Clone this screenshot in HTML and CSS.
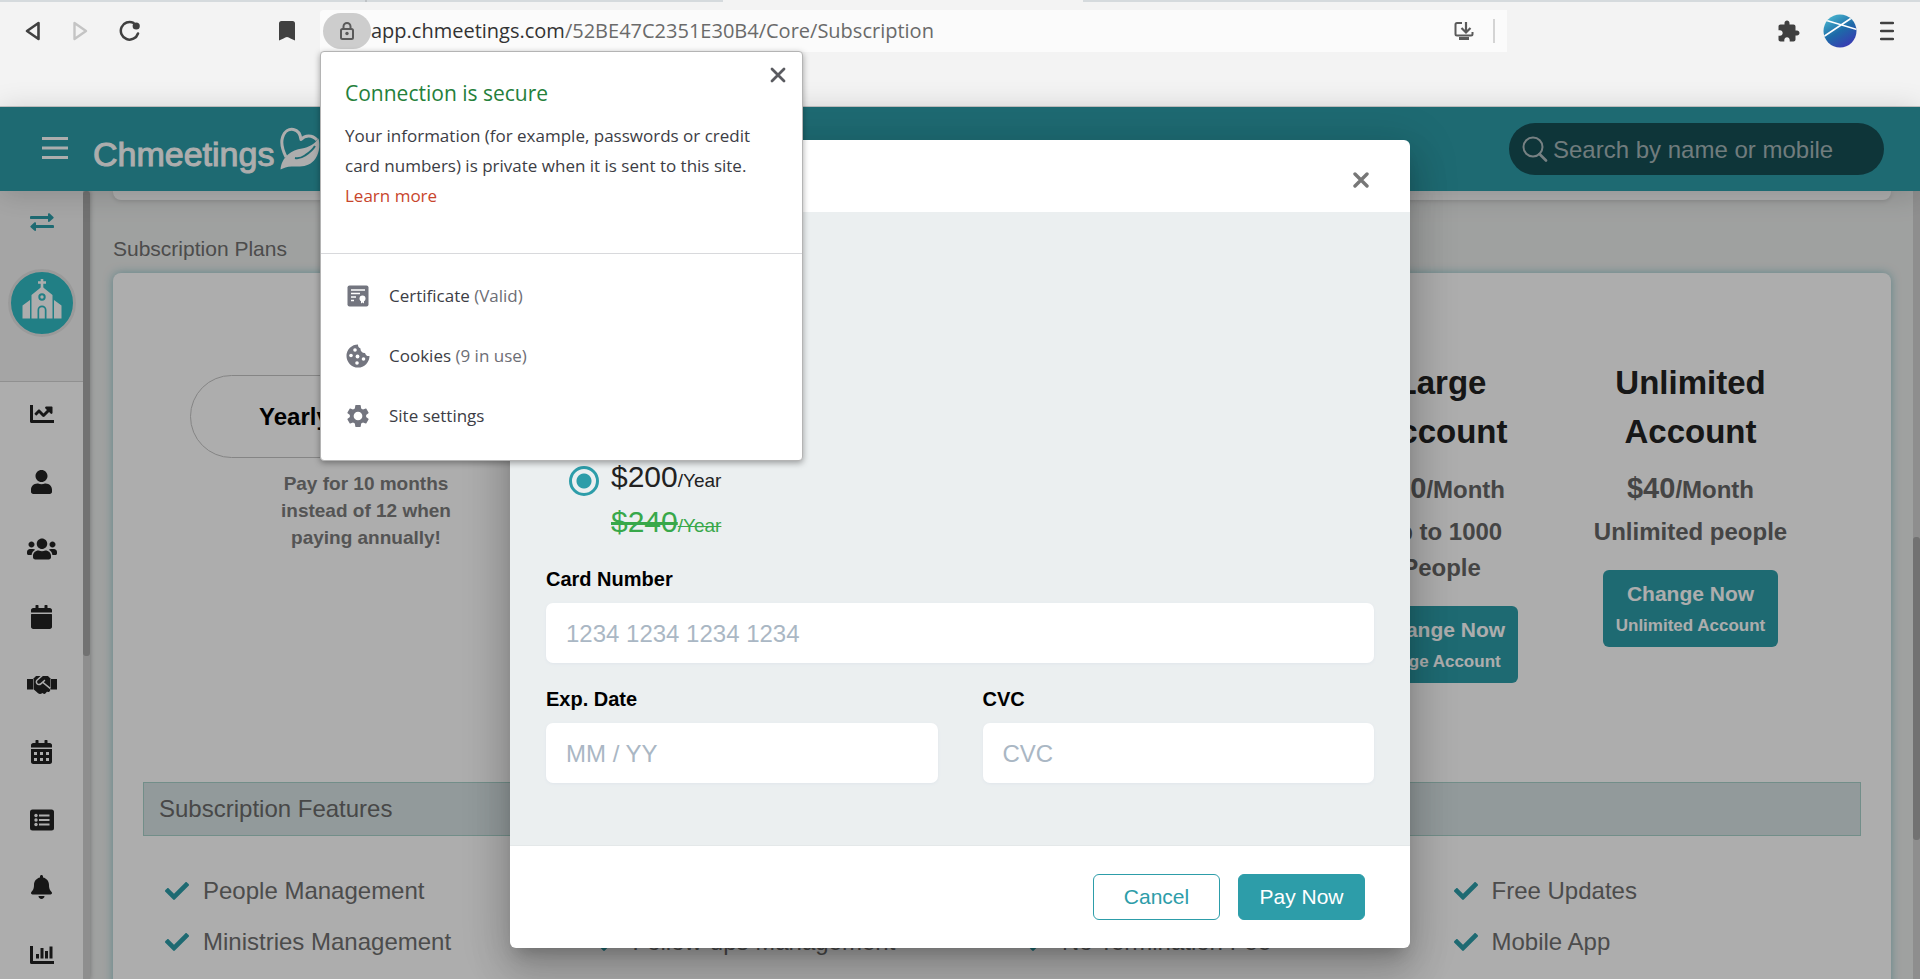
FILE: index.html
```html
<!DOCTYPE html>
<html lang="en">
<head>
<meta charset="utf-8">
<title>Subscription</title>
<link rel="stylesheet" href="styles.css">
</head>
<body>
<svg class="defs" aria-hidden="true">
  <symbol id="check" viewBox="0 0 512 512"><path d="M173.9 439.4l-166.4-166.4c-10-10-10-26.2 0-36.2l36.2-36.2c10-10 26.2-10 36.2 0L192 312.7 432.1 72.6c10-10 26.2-10 36.2 0l36.2 36.2c10 10 10 26.2 0 36.2l-294.4 294.4c-10 10-26.2 10-36.2 0z"/></symbol>
</svg>
<div class="window">
  <header class="chrome">
    <div class="tabstrip"><span class="tab-sep"></span><span class="tab-active"></span></div>
    <div class="toolbar">
      <nav class="nav-buttons">
        <button class="icon-btn" aria-label="Back"><svg width="16" height="22" viewBox="0 0 16 22"><path d="M13.5 3v16L2 11z" fill="none" stroke="#404040" stroke-width="2.6" stroke-linejoin="round"/></svg></button>
        <button class="icon-btn" aria-label="Forward"><svg width="16" height="22" viewBox="0 0 16 22"><path d="M2.5 3v16L14 11z" fill="none" stroke="#c4c4c4" stroke-width="2.4" stroke-linejoin="round"/></svg></button>
        <button class="icon-btn" aria-label="Reload"><svg width="22" height="22" viewBox="0 0 22 22"><path d="M14.5 2.9A8.8 8.8 0 1 0 19 13.5" fill="none" stroke="#404040" stroke-width="2.5" stroke-linecap="round"/><circle cx="17.2" cy="6" r="3.6" fill="#404040"/></svg></button>
      </nav>
      <button class="icon-btn bookmark" aria-label="Bookmark"><svg width="16" height="20" viewBox="0 0 16 20"><path d="M2.5 0h11A2.500 2.500 0 0 1 16 2.500V19.500L11.500 17.500Q8 14.500 4.500 17.500L0 19.500V2.500A2.500 2.500 0 0 1 2.500 0z" fill="#404040"/></svg></button>
      <div class="address">
        <button class="lock" aria-label="Site information"><svg width="14" height="18" viewBox="0 0 14 18"><rect x="1" y="7" width="12" height="10" rx="1.500" fill="none" stroke="#5a5a5a" stroke-width="2"/><path d="M3.500 7V4.500a3.500 3.500 0 0 1 7 0V7" fill="none" stroke="#5a5a5a" stroke-width="2"/><circle cx="7" cy="11.500" r="1.700" fill="#5a5a5a"/></svg></button>
        <div class="url">app.chmeetings.com<span>/52BE47C2351E30B4/Core/Subscription</span></div>
        <button class="icon-btn" aria-label="Install app"><svg width="20" height="20" viewBox="0 0 20 20"><path d="M8 2H3a1.500 1.500 0 0 0-1.500 1.500V13A1.500 1.500 0 0 0 3 14.500h14a1.500 1.500 0 0 0 1.500-1.500v-2" fill="none" stroke="#5a5a5a" stroke-width="2"/><path d="M12 1v10M7.500 7l4.500 4.500L16.500 7" fill="none" stroke="#5a5a5a" stroke-width="2.200"/><path d="M5 16h10v3H5z" fill="#5a5a5a"/></svg></button>
        <span class="address-sep"></span>
      </div>
      <div class="chrome-actions">
        <button class="icon-btn" aria-label="Extensions"><svg width="22" height="22" viewBox="1.500 0.500 22 22"><path d="M20.500 11H19V7c0-1.100-.9-2-2-2h-4V3.500C13 2.120 11.880 1 10.500 1S8 2.120 8 3.500V5H4c-1.100 0-1.990.9-1.990 2v3.800H3.500c1.490 0 2.700 1.210 2.700 2.700s-1.210 2.700-2.700 2.700H2V20c0 1.100.9 2 2 2h3.800v-1.500c0-1.490 1.210-2.700 2.700-2.700 1.490 0 2.700 1.210 2.700 2.700V22H17c1.100 0 2-.9 2-2v-4h1.500c1.380 0 2.500-1.120 2.500-2.500S21.880 11 20.500 11z" fill="#404040"/></svg></button>
        <button class="icon-btn" aria-label="Profile"><svg width="34" height="34" viewBox="0 0 34 34"><defs><linearGradient id="av" x1="0.200" y1="0" x2="0.800" y2="1"><stop offset="0" stop-color="#4ab8d0"/><stop offset=".5" stop-color="#1d6aa8"/><stop offset="1" stop-color="#3c35b4"/></linearGradient><clipPath id="avc"><circle cx="17" cy="17" r="16.500"/></clipPath></defs><circle cx="17" cy="17" r="16.500" fill="url(#av)"/><path d="M0 23L30 3M2 6L34 15.500" stroke="#fff" stroke-width="1.600" clip-path="url(#avc)"/></svg></button>
        <button class="icon-btn" aria-label="Menu"><svg width="14" height="20" viewBox="0 0 14 20"><path d="M1 2h12M1 10h12M1 18h12" stroke="#404040" stroke-width="2.400" stroke-linecap="round"/></svg></button>
      </div>
    </div>
  </header>

  <div class="app">
    <header class="app-bar">
      <button class="icon-btn" aria-label="Toggle menu"><svg width="26" height="22" viewBox="0 0 26 22"><path d="M0 1.500h26M0 11h26M0 20.500h26" stroke="#fff" stroke-width="3"/></svg></button>
      <a class="logo" href="#"><span>Chmeetings</span><svg width="46" height="46" viewBox="0 0 46 46"><path d="M6 31C3 25 .5 18 2.500 11.500 4.500 5 9 2.500 13.500 3.500 18.500 4.500 20.500 9 21 13.500 25 9 32 8.500 37 14" fill="none" stroke="#fff" stroke-width="3" stroke-linejoin="round"/><path d="M.5 43.500C1 38 3 33 8 28.500 12 25 16.500 23.500 22 22.500 29 21 34 18.500 38.500 12.500 40.500 20 39 29 34 34.500 29 40 22 41 14 40.500 8 40 4 41.500.5 43.500z" fill="#fff"/><path d="M15 32c4 .8 7-.5 10-2.500s7-4.500 10-9.500" fill="none" stroke="#2d9da9" stroke-width="2"/></svg></a>
      <label class="search"><svg width="26" height="26" viewBox="0 0 26 26"><circle cx="11" cy="11" r="9.500" fill="none" stroke="#b0bfc1" stroke-width="2"/><path d="M17.500 18l6.500 6.500" stroke="#b0bfc1" stroke-width="2.600" stroke-linecap="round"/></svg><input type="search" aria-label="Search" placeholder="Search by name or mobile"></label>
    </header>
    <div class="app-body">
      <aside class="sidebar">
        <div class="side-content">
          <div class="side-top">
            <a href="#" aria-label="Switch"><svg width="24" height="18" viewBox="0 0 24 18"><path d="M1.300 4.500H20M4 13.500h18.700" stroke="#2d9da9" stroke-width="3" stroke-linecap="round"/><path d="M18 1.200c0-1 1-1.400 1.700-.7l3.700 3.400c.4.400.4.900 0 1.300l-3.700 3.400c-.7.700-1.700.200-1.700-.7zM6 10.200c0-1-1-1.400-1.700-.7L.6 12.900c-.4.400-.4.900 0 1.300l3.700 3.400c.7.700 1.700.2 1.700-.7z" fill="#2d9da9"/></svg></a>
            <a class="church" href="#" aria-label="Church"><svg width="40" height="40" viewBox="0 0 40 40"><path d="M20 0v9M16 3.500h8" stroke="#fff" stroke-width="2.600"/><path d="M20 7.500l10.500 8.500v23.500h-6V31a4.500 4.500 0 0 0-9 0v8.500h-6V16z" fill="#fff"/><path d="M.5 26.500l7.500-5.500v18.500H.5zM39.500 26.500L32 21v18.500h7.500zM17.200 39.500V31a2.800 2.800 0 0 1 5.600 0v8.500z" fill="#fff"/><circle cx="20" cy="18" r="2.700" fill="none" stroke="#31bcc4" stroke-width="2"/></svg></a>
          </div>
          <nav class="side-nav">
            <a href="#" aria-label="Dashboard"><svg width="24" height="24" viewBox="0 0 512 512"><path d="M496 384H64V64H0v352c0 17.700 14.300 32 32 32h480v-64zM464 96H346c-21.400 0-32.100 25.900-17 41l32.400 32.400L288 242.800l-73.400-73.400c-12.500-12.500-32.800-12.500-45.300 0l-68.700 68.700c-6.300 6.300-6.300 16.400 0 22.600l22.600 22.600c6.300 6.300 16.400 6.300 22.600 0L192 237.300l73.400 73.400c12.500 12.500 32.800 12.500 45.300 0l96-96 32.400 32.400c15.100 15.100 41 4.400 41-17V112c0-8.800-7.200-16-16-16z"/></svg></a>
            <a href="#" aria-label="People"><svg width="21" height="24" viewBox="0 0 448 512"><path d="M224 256c70.700 0 128-57.300 128-128S294.700 0 224 0 96 57.300 96 128s57.300 128 128 128zm89.600 32h-16.700c-22.200 10.200-46.900 16-72.900 16s-50.600-5.800-72.900-16h-16.700C60.200 288 0 348.200 0 422.400V464c0 26.500 21.500 48 48 48h352c26.500 0 48-21.500 48-48v-41.600c0-74.200-60.200-134.400-134.400-134.400z"/></svg></a>
            <a href="#" aria-label="Groups"><svg width="30" height="24" viewBox="0 0 640 512"><path d="M96 224c35.300 0 64-28.700 64-64s-28.700-64-64-64-64 28.700-64 64 28.700 64 64 64zm448 0c35.300 0 64-28.700 64-64s-28.700-64-64-64-64 28.700-64 64 28.700 64 64 64zm32 32h-64c-17.600 0-33.500 7.100-45.100 18.600 40.300 22.100 68.900 62 75.100 109.400h66c17.700 0 32-14.300 32-32v-32c0-35.300-28.700-64-64-64zm-256 0c61.900 0 112-50.100 112-112S381.900 32 320 32 208 82.100 208 144s50.100 112 112 112zm76.800 32h-8.300c-20.800 10-43.900 16-68.500 16s-47.600-6-68.500-16h-8.300C179.600 288 128 339.600 128 403.200V432c0 26.500 21.500 48 48 48h288c26.500 0 48-21.500 48-48v-28.800c0-63.600-51.600-115.200-115.200-115.200zm-223.700-13.400C161.500 263.100 145.600 256 128 256H64c-35.300 0-64 28.700-64 64v32c0 17.700 14.300 32 32 32h65.900c6.300-47.400 34.900-87.300 75.200-109.400z"/></svg></a>
            <a href="#" aria-label="Events"><svg width="21" height="24" viewBox="0 0 448 512"><path d="M12 192h424c6.600 0 12 5.400 12 12v260c0 26.500-21.500 48-48 48H48c-26.500 0-48-21.500-48-48V204c0-6.600 5.400-12 12-12zm436-44v-36c0-26.500-21.500-48-48-48h-48V12c0-6.600-5.400-12-12-12h-40c-6.600 0-12 5.400-12 12v52H160V12c0-6.600-5.400-12-12-12h-40c-6.600 0-12 5.400-12 12v52H48C21.500 64 0 85.500 0 112v36c0 6.600 5.400 12 12 12h424c6.600 0 12-5.400 12-12z"/></svg></a>
            <a href="#" aria-label="Follow-ups"><svg width="30" height="24" viewBox="0 0 640 512"><path d="M434.700 64h-85.900c-8 0-15.700 3-21.600 8.400l-98.300 90c-16.900 15.700-16.600 40.900-2.400 56.400 12.700 13.900 39.400 17.600 56.500 2.500l79.900-73.200c6.500-5.900 16.700-5.500 22.600 1 6 6.500 5.500 16.600-1 22.600l-26.100 23.900L504 313.800c2.900 2.400 5.500 5 7.900 7.700V128l-54.600-54.600c-5.900-6-14.100-9.400-22.600-9.400zM500 128h140v224H500zM0 128h140v224H0zM483.900 338.700L334.600 217.500l-30 27.500c-29.700 27.100-75.200 24.500-101.700-4.400-26.900-29.400-24.800-74.900 4.400-101.700L289.100 64h-83.800c-8.500 0-16.600 3.400-22.600 9.400L128 128v223.900h18.300l90.500 81.900c27.400 22.300 67.700 18.100 90-9.300l.2-.2 17.900 15.500c15.900 13 39.400 10.500 52.300-5.400l31.400-38.600 5.400 4.400c13.700 11.100 33.900 9.100 45-4.700l9.500-11.700c11.200-13.800 9.100-33.900-4.600-45.100z"/></svg></a>
            <a href="#" aria-label="Calendar"><svg width="21" height="24" viewBox="0 0 448 512"><path fill-rule="evenodd" d="M0 192h448v272c0 26.500-21.500 48-48 48H48c-26.500 0-48-21.500-48-48zM64 256v64h64v-64zM192 256v64h64v-64zM320 256v64h64v-64zM64 384v64h64v-64zM192 384v64h64v-64zM320 384v64h64v-64zM448 160v-48c0-26.500-21.500-48-48-48h-48V12c0-6.600-5.400-12-12-12h-40c-6.600 0-12 5.400-12 12v52H160V12c0-6.600-5.400-12-12-12h-40c-6.600 0-12 5.400-12 12v52H48C21.500 64 0 85.500 0 112v48z"/></svg></a>
            <a href="#" aria-label="Forms"><svg width="24" height="24" viewBox="0 0 24 24"><rect y="1.500" width="24" height="21" rx="2.500"/><path d="M9 7.500h10.500M9 12h10.500M9 16.500h10.500" stroke="#fff" stroke-width="2.200"/><circle cx="6" cy="7.500" r="1.700" fill="#fff"/><circle cx="6" cy="12" r="1.700" fill="#fff"/><circle cx="6" cy="16.500" r="1.700" fill="#fff"/></svg></a>
            <a href="#" aria-label="Notifications"><svg width="21" height="24" viewBox="0 0 448 512"><path d="M224 512c35.300 0 64-28.700 64-64H160c0 35.400 28.700 64 64 64zm215.400-149.700c-19.300-20.800-55.500-52-55.500-154.300 0-77.700-54.500-139.900-127.900-155.200V32c0-17.700-14.300-32-32-32s-32 14.300-32 32v20.800C118.600 68.100 64.100 130.300 64.100 208c0 102.300-36.200 133.500-55.500 154.300-6 6.500-8.700 14.200-8.600 21.700.1 16.400 13 32 32.100 32h383.800c19.100 0 32-15.600 32.100-32 0-7.500-2.600-15.300-8.600-21.700z"/></svg></a>
            <a href="#" aria-label="Reports"><svg width="24" height="24" viewBox="0 0 24 24"><path d="M0 3h3v15h21v3H1.500A1.500 1.500 0 0 1 0 19.500zM6 11h3v4.500H6zM10.500 5h3v10.500h-3zM15 8h3v7.500h-3zM19.500 3.500h3v12h-3z"/></svg></a>
          </nav>
        </div>
        <div class="side-scroll"><i></i></div>
      </aside>
      <main class="main">
        <div class="content">
          <section class="card card-prev"></section>
          <h2 class="section-title">Subscription Plans</h2>
          <section class="card card-plans">
            <div class="plans">
              <div class="billing">
                <button class="cycle">Yearly</button>
                <p>Pay for 10 months<br>instead of 12 when<br>paying annually!</p>
              </div>
              <article class="plan plan-large">
                <h3>Large<br>Account</h3>
                <p class="price">$30<small>/Month</small></p>
                <p class="seats">Up to 1000<br>People</p>
                <button class="change">Change Now<small>Large Account</small></button>
              </article>
              <article class="plan">
                <h3>Unlimited<br>Account</h3>
                <p class="price">$40<small>/Month</small></p>
                <p class="seats">Unlimited people</p>
                <button class="change">Change Now<small>Unlimited Account</small></button>
              </article>
            </div>
            <h3 class="features-title">Subscription Features</h3>
            <ul class="features">
              <li><svg width="24" height="24"><use href="#check"/></svg>People Management</li>
              <li class="last"><svg width="24" height="24"><use href="#check"/></svg>Free Updates</li>
              <li><svg width="24" height="24"><use href="#check"/></svg>Ministries Management</li>
              <li><svg width="24" height="24"><use href="#check"/></svg>Follow-ups Management</li>
              <li><svg width="24" height="24"><use href="#check"/></svg>No Termination Fee</li>
              <li><svg width="24" height="24"><use href="#check"/></svg>Mobile App</li>
            </ul>
          </section>
        </div>
        <div class="main-scroll"><i></i></div>
      </main>
    </div>

    <div class="backdrop">
      <form class="dialog" role="dialog" aria-label="Payment">
        <header class="dialog-head"><button type="button" class="icon-btn" aria-label="Close"><svg width="16" height="16" viewBox="0 0 16 16"><path d="M2 2l12 12M14 2L2 14" stroke="#777" stroke-width="3.400" stroke-linecap="round"/></svg></button></header>
        <div class="dialog-body">
          <label class="option"><input type="radio" name="cycle" checked><span><span class="amount">$200<small>/Year</small></span><s class="amount old">$240<small><s>/Year</s></small></s></span></label>
          <div class="fields">
            <div class="field wide"><label for="card">Card Number</label><input id="card" type="text" placeholder="1234 1234 1234 1234"></div>
            <div class="field"><label for="exp">Exp. Date</label><input id="exp" type="text" placeholder="MM / YY"></div>
            <div class="field"><label for="cvc">CVC</label><input id="cvc" type="text" placeholder="CVC"></div>
          </div>
        </div>
        <footer class="dialog-foot"><button type="button" class="btn outline">Cancel</button><button type="button" class="btn solid">Pay Now</button></footer>
      </form>
    </div>
  </div>

  <section class="site-info">
    <button class="icon-btn site-close" aria-label="Close"><svg width="16" height="16" viewBox="0 0 16 16"><path d="M2 2l12 12M14 2L2 14" stroke="#5a5b60" stroke-width="2.800" stroke-linecap="round"/></svg></button>
    <div class="site-text">
      <h2>Connection is secure</h2>
      <p>Your information (for example, passwords or credit<br>card numbers) is private when it is sent to this site.</p>
      <a href="#">Learn more</a>
    </div>
    <ul class="site-list">
      <li><svg width="24" height="24" viewBox="0 0 24 24"><rect x="1.500" y="1.500" width="21" height="21" rx="2" fill="#73757f"/><path d="M5 6h14M5 9.500h9M5 13h5M5 16.500h3" stroke="#fff" stroke-width="1.700"/><circle cx="16.500" cy="14.500" r="3" fill="#fff"/><path d="M15 16h3v3.500l-1.500-1-1.500 1z" fill="#fff"/></svg><span>Certificate <em>(Valid)</em></span></li>
      <li><svg width="24" height="24" viewBox="0 0 24 24"><path d="M12 .5A11.500 11.500 0 1 0 23.500 12a4 4 0 0 1-4.500-3 4 4 0 0 1-4.500-4.500A4 4 0 0 1 12 .5z" fill="#73757f"/><g fill="#fff"><circle cx="9" cy="6" r="1.800"/><circle cx="5" cy="11.500" r="1.800"/><circle cx="11.500" cy="12.500" r="1.900"/><circle cx="17.500" cy="15" r="1.800"/><circle cx="11" cy="19" r="1.800"/></g></svg><span>Cookies <em>(9 in use)</em></span></li>
      <li><svg width="24" height="24" viewBox="1 1 22 22"><path d="M19.430 12.980c.04-.32.07-.64.07-.98s-.03-.66-.07-.98l2.110-1.650c.19-.15.24-.42.12-.64l-2-3.460c-.12-.22-.39-.3-.61-.22l-2.490 1c-.52-.4-1.080-.73-1.690-.98l-.38-2.650C14.460 2.180 14.250 2 14 2h-4c-.25 0-.46.18-.49.42l-.38 2.650c-.61.25-1.170.59-1.690.98l-2.490-1c-.23-.09-.49 0-.61.22l-2 3.460c-.13.22-.07.49.12.64l2.110 1.650c-.04.32-.07.65-.07.98s.03.66.07.98l-2.110 1.650c-.19.15-.24.42-.12.64l2 3.460c.12.22.39.3.61.22l2.490-1c.52.4 1.080.73 1.690.98l.38 2.650c.03.24.24.42.49.42h4c.25 0 .46-.18.49-.42l.38-2.650c.61-.25 1.170-.59 1.690-.98l2.490 1c.23.09.49 0 .61-.22l2-3.460c.12-.22.07-.49-.12-.64l-2.110-1.650zM12 16a4 4 0 1 1 0-8 4 4 0 0 1 0 8z" fill="#73757f"/></svg><span>Site settings</span></li>
    </ul>
  </section>
</div>
</body>
</html>
```

FILE: styles.css
```css
* { box-sizing: border-box; }
html, body { height: 100%; }
body { margin: 0; font-family: "Liberation Sans", Arial, sans-serif; color: #666; overflow: hidden; }
h2, h3, p, ul { margin: 0; padding: 0; font-weight: inherit; list-style: none; }
button, input { font-family: inherit; }
svg { display: block; flex: none; }
a { text-decoration: none; color: inherit; }
.defs { display: none; }
.icon-btn { display: flex; padding: 0; border: 0; background: none; }
.window { position: relative; display: flex; flex-direction: column; height: 100vh; background: #f3f3f3; }

/* browser chrome */
.chrome { display: flex; flex-direction: column; height: 107px; flex: none; border-bottom: 1px solid #c8c8c8; }
.tabstrip { display: flex; height: 2px; background: #d5dadd; padding-left: 365px; }
.tab-sep { width: 2px; background: #bfc3c6; }
.tab-active { width: 360px; margin-left: 356px; background: #f3f3f3; }
.toolbar { display: flex; align-items: center; height: 42px; margin-top: 8px; }
.nav-buttons { display: flex; align-items: center; gap: 31px; padding-left: 25px; width: 279px; }
.address { display: flex; align-items: center; width: 1187px; height: 42px; margin-left: 25px; padding: 0 12px 0 3px; background: #fbfbfb; border-top-left-radius: 4px; }
.lock { display: flex; align-items: center; justify-content: center; width: 48px; height: 36px; border: 0; border-radius: 18px; background: #cdcdcd; padding: 0; }
.url { flex: 1; font: 20px/36px "Open Sans", sans-serif; color: #333; }
.url span { color: #6a6a6a; }
.address-sep { width: 2px; height: 24px; margin-left: 19px; background: #d4d4d4; }
.chrome-actions { display: flex; align-items: center; gap: 23px; margin-left: auto; padding-right: 26px; }

/* application */
.app { position: relative; flex: 1; min-height: 0; display: flex; flex-direction: column; }
.app-bar { position: relative; display: flex; align-items: center; height: 84px; flex: none; padding: 0 36px 0 42px; background: #2d9da9; box-shadow: 0 3px 30px rgba(0, 0, 0, .16); z-index: 1; }
.app-bar > .icon-btn { margin-bottom: 2px; }
.logo { display: flex; align-items: center; gap: 6px; margin-left: 25px; color: #fff; font-size: 34px; line-height: 46px; }
.logo span { padding-top: 9px; -webkit-text-stroke: 1px #fff; }
.search { display: flex; align-items: center; gap: 5px; width: 375px; height: 52px; margin-left: auto; padding: 0 13px; border-radius: 26px; background: #164e55; }
.search input { flex: 1; min-width: 0; border: 0; padding: 2px 0 0; background: none; font-size: 24px; }
.search input::placeholder { color: #a5b7b9; opacity: 1; }
.app-body { flex: 1; min-height: 0; display: flex; }
.sidebar { display: flex; width: 90px; flex: none; background: #fff; box-shadow: 0 0 5px rgba(0, 0, 0, .3); z-index: 0; position: relative; }
.side-content { width: 83px; overflow: hidden; }
.side-top { display: flex; flex-direction: column; align-items: center; gap: 38px; height: 191px; padding-top: 22px; border-bottom: 1px solid #d4d4d4; background: #f4f4f4; }
.church { display: flex; justify-content: center; width: 68px; height: 68px; padding-top: 7px; border: 3px solid #e4e4e4; border-radius: 50%; background: #31bcc4; }
.side-nav { display: flex; flex-direction: column; justify-content: space-between; height: 585px; padding-top: 20px; fill: #222; }
.side-nav a { display: flex; justify-content: center; }
.side-scroll, .main-scroll { width: 7px; flex: none; background: #d2d2d2; }
.side-scroll i { display: block; height: 59%; border-radius: 3px; background: #a8a8a8; }
.main { flex: 1; min-width: 0; display: flex; background: #ebedec; }
.main-scroll { padding-top: 346px; }
.main-scroll i { display: block; height: 303px; border-radius: 3px; background: #a8a8a8; }
.content { flex: 1; min-width: 0; padding: 0 22px 0 23px; overflow: hidden; }
.card { background: #fff; }
.card-prev { height: 9px; border-radius: 0 0 8px 8px; box-shadow: 0 1px 5px rgba(0, 0, 0, .15); }
.section-title { padding: 37px 0 13px; font-size: 21px; line-height: 23px; color: #707070; }
.card-plans { min-height: 720px; padding: 85px 30px 0; border-radius: 8px; box-shadow: 0 0 10px rgba(45, 157, 169, .5); }
.plans { display: grid; grid-template-columns: 446fr 728fr 249fr 249fr 46fr; height: 424px; }
.billing { display: flex; flex-direction: column; align-items: center; padding-top: 17px; font-weight: bold; font-size: 19px; line-height: 27px; text-align: center; }
.cycle { width: 352px; height: 83px; margin-bottom: 12px; border: 1px solid #c4c4c4; border-radius: 42px; background: none; color: #000; font-size: 24px; font-weight: bold; text-align: left; padding: 0 68px; }
.billing p { color: #7c7c7c; }
.plan { text-align: center; font-weight: bold; font-size: 24px; color: #666; }
.plan-large { grid-column: 3; }
.plan h3 { font-weight: bold; font-size: 33px; line-height: 49px; color: #222; }
.price { font-size: 29px; line-height: 40px; padding-top: 12px; }
.price small { font-size: 24px; }
.seats { line-height: 36px; padding: 4px 0 20px; }
.change { padding: 9px 13px 5px; border: 0; border-radius: 6px; background: #2d9da9; color: #fff; font-size: 21px; line-height: 30px; font-weight: bold; }
.change small { display: block; font-size: 17px; line-height: 33px; }
.features-title { height: 54px; padding: 0 15px; border: 1px solid #a8d1cb; background: #d7e4e5; font-size: 24px; line-height: 52px; color: #6a6a6a; }
.features { display: grid; grid-template-columns: repeat(4, 1fr); padding-top: 29px; }
.features li { display: flex; align-items: center; gap: 14px; height: 51px; padding-left: 22px; font-size: 24px; color: #707070; fill: #2d9da9; }
.features .last { grid-column: 4; }

/* payment dialog */
.backdrop { position: absolute; inset: 0; z-index: 2; padding-top: 33px; background: rgba(0, 0, 0, .32); }
.dialog { width: 900px; margin: 0 auto; border-radius: 6px; overflow: hidden; background: #fff; box-shadow: 0 11px 15px -7px rgba(0, 0, 0, .2), 0 24px 38px 3px rgba(0, 0, 0, .14), 0 9px 46px 8px rgba(0, 0, 0, .12); }
.dialog-head { display: flex; justify-content: flex-end; align-items: center; height: 72px; padding: 8px 41px 0; }
.dialog-body { padding: 242px 36px 62px; background: #ebeff0; border-bottom: 1px solid #e4e8e9; }
.option { display: flex; align-items: flex-start; gap: 12px; padding-left: 23px; color: #222; }
.option input { appearance: none; width: 30px; height: 30px; margin: 12px 0 0; border: 3px solid #2d9da9; border-radius: 50%; background: radial-gradient(circle, #2d9da9 7px, transparent 8px); }
.amount { display: block; font-size: 30px; line-height: 45px; }
.amount small { font-size: 19px; line-height: 20px; }
.old { color: #38a84a; text-decoration: line-through 3px; }
.old small { display: inline-block; }
.old small s { text-decoration: line-through 1px; }
.fields { display: grid; grid-template-columns: 1fr 1fr; gap: 24px 45px; padding-top: 23px; }
.field { display: flex; flex-direction: column; gap: 12px; }
.wide { grid-column: 1 / -1; }
.field label { font-size: 20px; line-height: 24px; font-weight: bold; color: #000; }
.field input { width: 100%; height: 60px; padding: 2px 20px 0; border: 0; border-radius: 7px; background: #fff; font-size: 24px; box-shadow: 0 1px 3px #e0e6eb; }
.field input::placeholder { color: #aab7c4; opacity: 1; }
.dialog-foot { display: flex; justify-content: flex-end; gap: 18px; padding: 28px 45px; }
.btn { width: 127px; height: 46px; border: 1px solid #2d9da9; border-radius: 6px; padding: 0; font-size: 21px; }
.outline { background: #fff; color: #2d9da9; }
.solid { background: #2d9da9; color: #fff; }

/* site information bubble */
.site-info { position: absolute; left: 320px; top: 51px; width: 483px; z-index: 5; border: 1px solid #b4b4b4; border-radius: 4px; background: #fff; box-shadow: 0 2px 6px rgba(0, 0, 0, .35); font-family: "Open Sans", sans-serif; font-size: 17px; line-height: 30px; color: #3c3d45; }
.site-close { position: absolute; right: 16px; top: 15px; }
.site-text { height: 202px; padding: 24px 24px 0; border-bottom: 1px solid #d8d9dc; }
.site-text h2 { font-size: 21px; line-height: 34px; padding-bottom: 11px; color: #25803b; }
.site-text p { white-space: nowrap; }
.site-text a { display: block; color: #c8452c; }
.site-list { padding: 12px 26px 14px 25px; }
.site-list li { display: flex; align-items: center; gap: 19px; height: 60px; }
.site-list em { font-style: normal; color: #6d6e75; }
```
